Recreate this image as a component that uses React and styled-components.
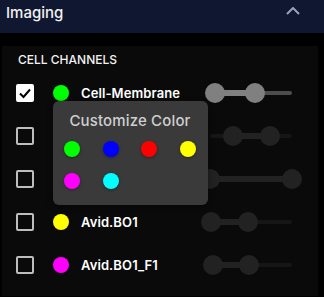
import styled, { createGlobalStyle } from "styled-components";

const GlobalStyle = createGlobalStyle`
  html, body {
    margin: 0;
    padding: 0;
    background: #000;
    font-family: Inter, "Noto Sans", sans-serif;
  }
`;

const channels = [
  { name: "Cell-Membrane", color: "#00ff00", checked: true, min: 6, max: 55, picker: true },
  { name: "", color: null, checked: false, min: 28, max: 73 },
  { name: "", color: null, checked: false, min: 0, max: 100 },
  { name: "Avid.BO1", color: "#ffff00", checked: false, min: 1, max: 46 },
  { name: "Avid.BO1_F1", color: "#ff00ff", checked: false, min: 4, max: 48 },
];

const swatches = ["#00ff00", "#0000ff", "#ff0000", "#ffff00", "#ff00ff", "#00ffff"];

const Page = styled.div`
  width: 324px;
  height: 297px;
  overflow: hidden;
`;

const Header = styled.div`
  height: 33px;
  box-sizing: border-box;
  padding: 3px 24px 0 6px;
  display: flex;
  align-items: flex-start;
  justify-content: space-between;
  background: #0f1731;
`;

const HeaderTitle = styled.span`
  font-size: 15px;
  line-height: 20px;
  font-weight: 500;
  color: #f2f2f2;
`;

const Chevron = styled.svg`
  margin-top: 4px;
`;

const Panel = styled.div`
  margin: 13px 6px 0 2px;
  height: 250px;
  background: #0a0a0a;
  padding: 6px 16px 0 14px;
  box-sizing: border-box;
`;

const SectionTitle = styled.div`
  padding-left: 2px;
  font-size: 12px;
  line-height: 16px;
  font-weight: 500;
  color: #f2f2f2;
  margin-bottom: 3px;
`;

const Row = styled.div`
  height: 43px;
  display: flex;
  align-items: center;
`;

const Checkbox = styled.div`
  width: 18px;
  height: 18px;
  box-sizing: border-box;
  border-radius: 2px;
  border: 2px solid ${({ $checked }) => ($checked ? "#fff" : "#bdbdbd")};
  background: ${({ $checked }) => ($checked ? "#fff" : "transparent")};
  display: flex;
  align-items: center;
  justify-content: center;
  flex-shrink: 0;
`;

const DotWrap = styled.div`
  position: relative;
  width: 16px;
  height: 16px;
  margin-left: 19px;
  flex-shrink: 0;
`;

const Dot = styled.div`
  width: 16px;
  height: 16px;
  border-radius: 50%;
  background: ${({ $color }) => $color || "transparent"};
`;

const Label = styled.span`
  margin-left: 12px;
  font-size: 13px;
  font-weight: 600;
  letter-spacing: 0.1px;
  color: #fff;
  white-space: nowrap;
`;

const Slider = styled.div`
  position: relative;
  margin-left: auto;
  width: 102px;
  height: 20px;
  display: flex;
  align-items: center;
  flex-shrink: 0;
`;

const Rail = styled.div`
  position: relative;
  flex: 1;
  margin: 0 10px;
  height: 4px;
  border-radius: 2px;
  background: ${({ $active }) => ($active ? "#4d4d4d" : "#161616")};
`;

const Range = styled.div`
  position: absolute;
  top: -1px;
  height: 6px;
  background: ${({ $active }) => ($active ? "#808080" : "#222")};
`;

const Thumb = styled.div`
  position: absolute;
  top: 50%;
  width: 20px;
  height: 20px;
  margin: -10px 0 0 -10px;
  border-radius: 50%;
  background: ${({ $active }) => ($active ? "#808080" : "#222")};
`;

const Popup = styled.div`
  position: absolute;
  top: 100%;
  left: 0;
  z-index: 10;
  width: 155px;
  height: 104px;
  box-sizing: border-box;
  padding: 10px 12px 0 11px;
  background: #3a3a3a;
  border-radius: 6px;
  box-shadow: 0 2px 6px rgba(0, 0, 0, 0.4);
`;

const PopupTitle = styled.div`
  text-align: center;
  font-size: 15px;
  line-height: 20px;
  font-weight: 500;
  letter-spacing: 0.15px;
  color: #cfcfcf;
  margin-bottom: 10px;
`;

const Swatches = styled.div`
  display: grid;
  grid-template-columns: repeat(4, 16px);
  justify-content: space-between;
  row-gap: 16px;
`;

const Swatch = styled.div`
  width: 16px;
  height: 16px;
  border-radius: 50%;
  background: ${({ $color }) => $color};
  box-shadow: 0 1px 3px rgba(0, 0, 0, 0.35);
`;

function RangeSlider({ min, max, active }) {
  return (
    <Slider>
      <Rail $active={active}>
        <Range $active={active} style={{ left: `${min}%`, width: `${max - min}%` }} />
        <Thumb $active={active} style={{ left: `${min}%` }} />
        <Thumb $active={active} style={{ left: `${max}%` }} />
      </Rail>
    </Slider>
  );
}

export default function App() {
  return (
    <Page>
      <GlobalStyle />
      <Header>
        <HeaderTitle>Imaging</HeaderTitle>
        <Chevron width="14" height="8" viewBox="0 0 14 8">
          <polyline points="1,7 7,1 13,7" fill="none" stroke="#9ba3b6" strokeWidth="2" />
        </Chevron>
      </Header>
      <Panel>
        <SectionTitle>CELL CHANNELS</SectionTitle>
        {channels.map((ch, i) => (
          <Row key={i}>
            <Checkbox $checked={ch.checked}>
              {ch.checked && (
                <svg width="14" height="14" viewBox="0 0 14 14">
                  <polyline points="2,7.5 5.5,11 12,3.5" fill="none" stroke="#000" strokeWidth="2" />
                </svg>
              )}
            </Checkbox>
            <DotWrap>
              <Dot $color={ch.color} />
              {ch.picker && (
                <Popup>
                  <PopupTitle>Customize Color</PopupTitle>
                  <Swatches>
                    {swatches.map((c) => (
                      <Swatch key={c} $color={c} />
                    ))}
                  </Swatches>
                </Popup>
              )}
            </DotWrap>
            <Label>{ch.name}</Label>
            <RangeSlider min={ch.min} max={ch.max} active={ch.checked} />
          </Row>
        ))}
      </Panel>
    </Page>
  );
}
